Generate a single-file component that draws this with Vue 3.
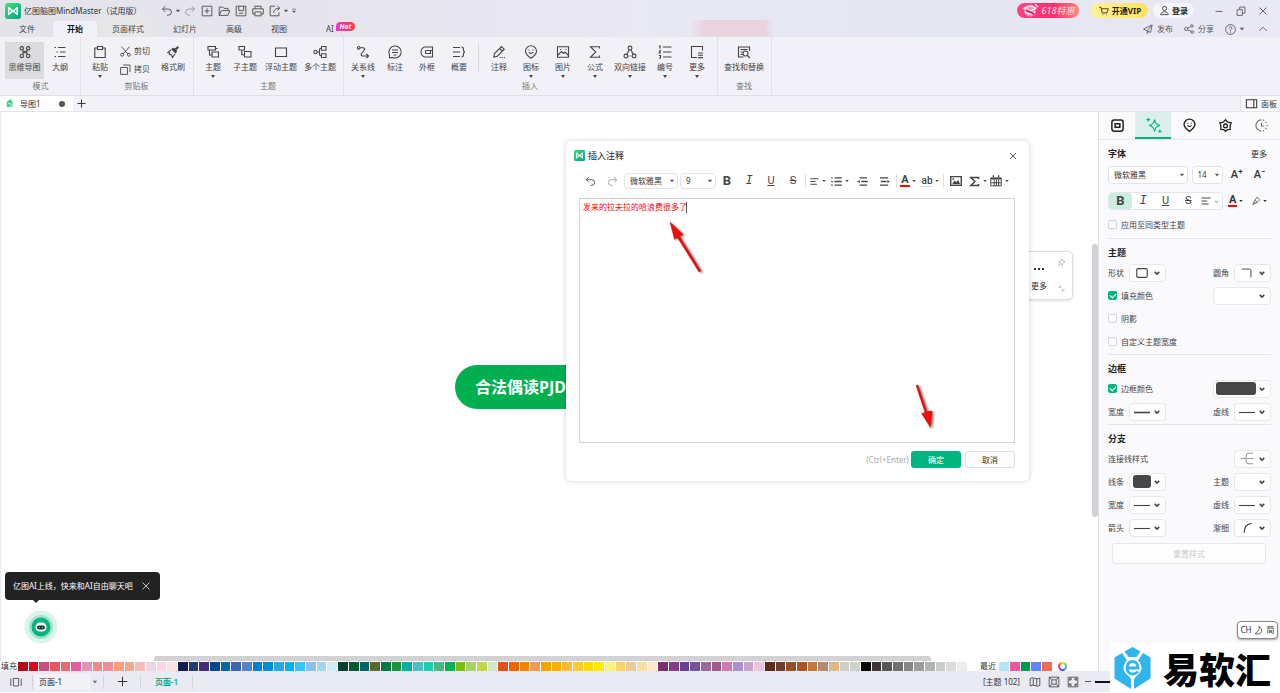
<script setup>
import { h, ref } from 'vue'

const note = ref('发来的拉夫拉的哈浪费很多了')
const fontName = ref('微软雅黑')
const noteSize = ref('9')
const textSize = ref('14')
const applySame = ref(false)
const fillOn = ref(true)
const shadowOn = ref(false)
const customWidth = ref(false)
const borderOn = ref(true)
const pageName = ref('页面-1')

const fill = (d) => ({ d, fill: 'currentColor', stroke: 'none' })
const bold = (d) => ({ d, 'stroke-width': 1.6 })

const icons = {
  undo: ['M6 2.500 2.800 5.800 6 9M3 5.800H9.500a3.500 3.500 0 0 1 0 7H8'],
  redo: ['M10 2.500 13.200 5.800 10 9M13 5.800H6.500a3.500 3.500 0 0 0 0 7H8'],
  plusBox: ['M2.500 2.500H13.500V13.500H2.500ZM8 5V11M5 8H11'],
  folder: ['M2.500 13V3.500H6.500L8 5H12.500V7M2.500 13 5 7.500H14.500L12.500 13Z'],
  save: ['M2.500 2.500H13.500V13.500H2.500ZM5.500 2.500V7.500H11V2.500M5.500 10.500H10.500'],
  print: ['M4.500 5.500V2.500H11.500V5.500M4.500 11.500H2V5.500H14V11.500H11.500M4.500 9H11.500V13.500H4.500Z'],
  exportBox: ['M8 2.500H2.500V13.500H12.500V9.500M6.500 10C6.500 6.500 9 4.800 13 4.800M10.500 2 13.500 4.800 10.500 7.500'],
  caret: [fill('M4.500 6H11.500L8 10Z')],
  chevron: ['M5 6.500 8 9.500 11 6.500'],
  overflow: ['M5 5H11', fill('M4.800 7.500H11.200L8 11Z')],
  minimize: ['M4 8.500H12'],
  restore: ['M3.500 6.500H9.500V13H3.500ZM6.500 6.500V3.500H12.500V10.500H9.500'],
  close: ['M4 4 12 12M12 4 4 12'],
  up: ['M3 10.500 8 5.500 13 10.500'],
  send: ['M2 8 13.500 2.500 11.500 12.500 7 10.500ZM7 10.500V14L9 11.500M7 10.500 13 3'],
  share: ['M6.500 8a2.200 2.200 0 1 1-4.400 0 2.200 2.200 0 0 1 4.400 0ZM13.500 4a1.700 1.700 0 1 1-3.400 0 1.700 1.700 0 0 1 3.400 0ZM14 12a1.700 1.700 0 1 1-3.400 0 1.700 1.700 0 0 1 3.400 0ZM6.200 7 10.200 4.800M6.200 9 10.800 11.200'],
  help: ['M14 8A6 6 0 1 1 2 8 6 6 0 0 1 14 8ZM6.200 6.700C6.200 4 9.900 4.200 9.800 6.600 9.600 7.800 8 7.800 8 9.500M8 10.500V12'],
  cart: ['M1.500 3H4L5.500 10.500H12L13.800 5H4.500M6 13H7M10.500 13H11.500'],
  user: ['M11 5a3 3 0 1 1-6 0 3 3 0 0 1 6 0ZM2.500 14C2.500 8.500 13.500 8.500 13.500 14Z'],
  mind: ['M6.500 4.300a1.700 1.700 0 1 1-3.400 0 1.700 1.700 0 0 1 3.400 0ZM12.900 4.300a1.700 1.700 0 1 1-3.400 0 1.700 1.700 0 0 1 3.400 0ZM6.500 11.900a1.700 1.700 0 1 1-3.400 0 1.700 1.700 0 0 1 3.400 0ZM12.900 11.900a1.700 1.700 0 1 1-3.400 0 1.700 1.700 0 0 1 3.400 0ZM5.800 5.800Q6.800 8 5.800 10.400M10.200 5.800Q9.200 8 10.200 10.400M6.300 7.500H9.700M6.300 8.800H9.700'],
  outline: ['M2.500 3.500H4M6 3.500H13.500M4.500 8H6M8 8H13.500M2.500 12.500H4M6 12.500H13.500'],
  paste: ['M5.500 4H2.800V13.500H13.200V4H10.500M5.500 2.500H10.500V5.500H5.500Z'],
  cut: ['M3 2 11 11M13 2 5 11M5.600 12a1.800 1.800 0 1 1-3.600 0 1.800 1.800 0 0 1 3.600 0ZM14 12a1.800 1.800 0 1 1-3.600 0 1.800 1.800 0 0 1 3.600 0Z'],
  copy: ['M2 5.500H10.500V14H2ZM5 2.500H13.500V11'],
  brush: [fill('M12.500 2 14 3.500 11.500 6 12 8 10.500 9.500 6.200 5.200 8 3.800 10 4.500Z'), 'M6 5.800 2.800 8.500 4.500 9 4.500 10.500 6.500 11 7.500 13.500 10 9.800'],
  topic: ['M3 2.500H10.500V6H3ZM4.500 6V11H7M7 8H13.500V13H7ZM10.500 4.500H12.500'],
  subtopic: ['M2 2.500H7.500V6H2ZM4.800 6V10.800H7.500M7.500 7.500H14V13H7.500Z'],
  floating: ['M2.500 4H13.500V12.500H2.500Z'],
  multi: ['M5.200 8a1.700 1.700 0 1 1-3.400 0 1.700 1.700 0 0 1 3.400 0ZM5.200 8H7.500M9.500 4.300H8.800Q7.500 4.300 7.500 6V10Q7.500 11.700 8.800 11.700H9.500M9.500 2.500H14V6.200H9.500ZM9.500 9.800H14V13.500H9.500Z'],
  relation: ['M5 3.800H8.500Q10.500 4 9 6.500L6.500 9.500Q5.500 11.700 7.500 12H13M11.500 10 13.500 12 11.500 14M5 3.800a1.300 1.300 0 1 1-2.600 0 1.300 1.300 0 0 1 2.600 0Z'],
  callout: ['M8 2A6 6 0 1 1 5.800 13.500L2.500 13.800V10.500A6 6 0 0 1 8 2ZM5 6H11M5 8.500H11M6.500 11H9.500'],
  boundary: ['M5.500 3H13.500V13H5.500Q2 11.500 2 8T5.500 3ZM6.500 6.500H13.500M6.500 9.500H11.500V6.500M6.500 6.500V9.500'],
  summary: ['M2 3.500H9M2 8H9M2 12.500H9M10.500 3Q12.500 3 12.500 5.500T14 8Q12.500 8 12.500 10.500T10.500 13'],
  noteIcon: ['M2.800 13 3.500 9.500 10.500 2.500 13.200 5.200 6.300 12.200ZM8.500 4.500 11.300 7.200M8.500 13.500H9.700M10.700 13.500H11.900M12.900 13.500H14'],
  pin: ['M8 14.300C4.500 12 2.500 10 2.500 7.300A5.500 5.500 0 0 1 13.500 7.300C13.500 10 11.500 12 8 14.300ZM5.800 8.200Q8 10.800 10.200 8.200M6.200 5.500V6.500M9.800 5.500V6.500'],
  picture: ['M2.500 2.800H13.500V13.200H2.500ZM3 11 6.500 7.500 8.500 9.500 10 8 13 11M5 5.500H6.200M10.500 5.500H11.500'],
  sigma: ['M12.500 4.500V2.700H3.500L8.800 8 3.500 13.300H12.500V11.500'],
  link: ['M9.900 4a1.900 1.900 0 1 1-3.800 0 1.900 1.900 0 0 1 3.800 0ZM5.800 12a1.900 1.900 0 1 1-3.800 0 1.900 1.900 0 0 1 3.800 0ZM14 12a1.900 1.900 0 1 1-3.800 0 1.900 1.900 0 0 1 3.800 0ZM7.200 5.800 4.800 10.200M8.800 5.800 11.200 10.200M6.500 12H7.500M8.500 12H9.500'],
  numbering: ['M6 3H14.500M6 8H14.500M6 13H14.500M2 2.500 3 2V4.800M2 6.800H3.500L2.200 9H3.800M2 11.500H3.500V14H2'],
  moreBox: ['M13.500 6.500V2.500H2.500V13.500H8M9 9H14M9 11.300H14M9 13.600H14'],
  find: ['M7.500 13H2.500V3H13.500V7M4.500 5.500H11.500M4.500 8H6.500M4.500 10.500H6.500M12 9.500a2.500 2.500 0 1 1-5 0 2.500 2.500 0 0 1 5 0ZM11.300 11.300 14 14'],
  plus: ['M8 3V13M3 8H13'],
  panel: ['M2.500 4H13.500V12.500H2.500ZM10.500 4V12.500'],
  tabTopic: [bold('M4.500 2H11.500Q14 2 14 4.500V11.500Q14 14 11.500 14H4.500Q2 14 2 11.500V4.500Q2 2 4.500 2ZM5.500 6.200H10.500V9.800H5.500Z')],
  tabStyle: ['M9 2.500Q9.800 7.200 14 8 9.800 8.800 9 13.500 8.200 8.800 4 8 8.200 7.200 9 2.500ZM3 .8V4.200M1.300 2.500H4.700M14 11.800V15M12.400 13.400H15.600'],
  tabMark: [{ d: 'M8 14.300C4.300 11.500 2.200 9.500 2.200 7A5.800 5.800 0 0 1 13.800 7C13.800 9.500 11.700 11.500 8 14.300Z', 'stroke-width': 1.5 }, 'M5.800 7.800Q8 10.300 10.200 7.800M6.200 5V6.200M9.800 5V6.200'],
  tabTheme: [{ d: 'M8 1.800 10.300 4.500 14 5.200 12.900 8.300 13 12.200 10 12.300 8 14.200 6 12.300 3 12.200 3.100 8.300 2 5.200 5.700 4.500ZM10 8.400a2 2 0 1 1-4 0 2 2 0 0 1 4 0Z', 'stroke-width': 1.4 }],
  tabHistory: ['M8 2A6 6 0 1 0 8 14M8 5V8.500H10.500', { d: 'M9.500 2.200A6 6 0 0 1 9.500 13.800', 'stroke-dasharray': '1.500 2' }],
  align: [bold('M2 4H14M2 8H9.500M2 12H11.500')],
  bullets: [bold('M5.500 3.500H14.500M5.500 8H14.500M5.500 12.500H14.500M1.500 3.500H3.300M1.500 8H3.300M1.500 12.500H3.300')],
  indent: [bold('M4.500 3.500H13.500M6.500 8H14.500M4.500 12.500H13.500'), fill('M1.500 8 4.500 6V10Z')],
  outdent: [bold('M2.500 3.500H12.500M3.500 8H10.500M2.500 12.500H12.500'), fill('M14.500 8 11.500 6V10Z')],
  image: [bold('M2 3H14V13H2Z'), fill('M3.500 11.800 6.500 7.500 8.500 9.500 10.500 6.500 12.800 11.800ZM4 4.800H6V6.500H4Z')],
  sigmaBold: [{ d: 'M13 4.800V3H3.500L8.500 8 3.500 13H13V11.200', 'stroke-width': 1.9 }],
  calendar: ['M2 4.500H14V13.500H2ZM6 6.500V13.500M8.500 6.500V13.500M11 6.500V13.500M2.500 10H13.500', bold('M2 5.500H14M5 1.500V4M11 1.500V4')],
  tack: ['M9 2 14 7 12 7.500 9.500 10 9 13 3 7 6 6.500 8.500 4ZM6 10 2 14'],
  collapse: ['M2.500 6H6.500V2M9.500 14V10H13.500'],
  pen: ['M3 14 5.500 7.500 9.500 2 14 6 9.500 11 4.500 12M6.800 6.500 10 10M3 14 7 10'],
  rect: [{ d: 'M3.500 3H12.500Q14 3 14 4.500V11.500Q14 13 12.500 13H3.500Q2 13 2 11.500V4.500Q2 3 3.500 3Z', 'stroke-width': 1.300 }],
  corner: ['M2 3.500H10.500Q12.500 3.500 12.500 5.500V13'],
  line: ['M0 8.500H16'],
  thick: [bold('M0 8.500H16')],
  branch: ['M1 8H14M6.500 8Q6.500 2.500 9 2.500H14M6.500 8Q6.500 13.500 9 13.500H14'],
  taper: [bold('M4 14Q4 4 13 3')],
  pages: ['M2 4V12.500M14 4V12.500M5 4H11V12.500H5Z'],
  map: ['M2.500 4Q5 2.500 8 4 11 5 13.500 3.500V12Q11 13.500 8 12 5 11 2.500 12.500ZM6 4V12M10 4V12'],
  fit: ['M2.500 2.500H13.500V13.500H2.500ZM5.500 5.500H10.500V10.500H5.500ZM2.500 2.500 5.500 5.500M13.500 2.500 10.500 5.500M2.500 13.500 5.500 10.500M13.500 13.500 10.500 10.500'],
  full: ['M2.500 2.500H13.500V13.500H2.500Z', bold('M4.500 6.500V4.500H6.500M9.500 4.500H11.500V6.500M4.500 9.500V11.500H6.500M9.500 11.500H11.500V9.500')],
  moon: ['M8.500 2Q11 8 3 12.500 9.500 15 12.500 10 14.500 5.500 8.500 2Z'],
}

const Icon = (props) =>
  h(
    'svg',
    { viewBox: '0 0 16 16', width: props.s || 16, height: props.s || 16, fill: 'none', stroke: 'currentColor', 'stroke-width': 1.1, 'aria-hidden': 'true' },
    icons[props.n].map((p) => h('path', typeof p === 'string' ? { d: p } : p)),
  )
Icon.props = ['n', 's']

const quick = [
  ['undo', 16, '撤销'], ['caret', 8, '撤销列表'], ['redo', 16, '恢复'], ['plusBox', 16, '新建'], ['folder', 16, '打开'],
  ['save', 16, '保存'], ['print', 16, '打印'], ['exportBox', 16, '导出'], ['caret', 8, '导出列表'], ['overflow', 12, '自定义'],
]
const tabs = ['文件', '开始', '页面样式', '幻灯片', '高级', '视图', 'AI']

const topicTools = [
  { t: '主题', i: 'topic', c: true }, { t: '子主题', i: 'subtopic' }, { t: '浮动主题', i: 'floating', w: 'w40' }, { t: '多个主题', i: 'multi', w: 'w38' },
]
const insertA = [
  { t: '关系线', i: 'relation', c: true }, { t: '标注', i: 'callout' }, { t: '外框', i: 'boundary' }, { t: '概要', i: 'summary' },
]
const insertB = [
  { t: '注释', i: 'noteIcon' }, { t: '图标', i: 'pin', c: true }, { t: '图片', i: 'picture', c: true }, { t: '公式', i: 'sigma', c: true },
  { t: '双向链接', i: 'link', c: true, w: 'w38' }, { t: '编号', i: 'numbering', c: true }, { t: '更多', i: 'moreBox', c: true },
]

const sideTabs = [
  ['tabTopic', '主题'], ['tabStyle', '样式'], ['tabMark', '标记'], ['tabTheme', '风格'], ['tabHistory', '历史'],
]

const swatches = (
  'b30a16 d80b1e c94f7c e85563 ea6a70 e65ca0 e095b8 ee8d87 ef8e9b ff9d78 f0a890 f6bcb8 ead5e8 fdd3e5 fde0e6 ' +
  '10214f 253c70 432f7a 04468c 0568a6 4162ae 5684c4 0181cf 018fcf 2aa9e0 00b4f1 33c7f7 8bc0ea a0d8ef cfebf5 ' +
  '053f2e 055a30 046664 566b2d 047a45 1c963c 00b0a0 50bfc3 1ccfb3 46bb80 00b155 80bb10 a4d265 bfd845 cfe8c8 ' +
  'e35020 ec6700 f08300 f39a55 f2a600 fdb000 fdb933 fbcb33 ffd900 ffec00 fbf180 fdd070 e9cc98 fddcac fce8cf ' +
  '7a3170 833c84 673f94 75529a 986aa2 a05a8a cf7cb2 ab92cf c8a4c8 eec3db ' +
  '5d2a1d 733c2f 934e2a ab5526 c2793f b58870 e0b886 d4ccc6 cbd5cb ' +
  '000000 3e3635 575757 6f6f6f 868686 9c9c9c b1b4b3 cacccc dcdcdc ededed'
).split(' ')
const recent = ['b3e5f5', 'f0569b', '049a49', '6286ff', 'f26b57']
</script>

<template>
  <div class="app">
    <header class="top">
      <div class="titlebar">
        <svg class="logo" viewBox="0 0 16 16" width="16" height="16" aria-hidden="true">
          <defs>
            <linearGradient id="lg" x1="0" y1="0" x2="1" y2="1">
              <stop offset="0" stop-color="#3ee07a" /><stop offset="1" stop-color="#0aa08c" />
            </linearGradient>
          </defs>
          <rect width="16" height="16" rx="3" fill="url(#lg)" />
          <path d="M3.800 11.500V4.500L8 8.500 12.200 4.500V11.500L8 7.500Z" fill="none" stroke="#fff" stroke-width="1.400" stroke-linejoin="round" />
        </svg>
        <span class="title">亿图脑图MindMaster（试用版）</span>
        <div class="quick">
          <button v-for="(q, i) in quick" :key="i" :class="['q' + q[1], { dim: q[0] === 'redo' }]" :aria-label="q[2]"><Icon :n="q[0]" :s="q[1] === 16 ? 14 : 10" /></button>
        </div>
        <div class="account">
          <button class="promo">
            <svg viewBox="0 0 18 15" width="18" height="15" aria-hidden="true">
              <circle cx="8" cy="7.500" r="6" fill="#ff8fb0" />
              <path d="M2 5 9 3 14 5 9 8ZM3 9Q8 13 13 9M13 1 16 4" fill="none" stroke="#fff" stroke-width="1.100" />
              <path d="M4 7 12 11" stroke="#c41f5f" stroke-width="1.500" />
            </svg>
            618特惠
          </button>
          <button class="vip"><Icon n="cart" :s="12" />开通VIP</button>
          <button class="login"><Icon n="user" :s="11" />登录</button>
        </div>
        <div class="win">
          <button aria-label="最小化"><Icon n="minimize" :s="14" /></button>
          <button aria-label="还原"><Icon n="restore" :s="14" /></button>
          <button aria-label="关闭"><Icon n="close" :s="14" /></button>
        </div>
      </div>
      <div class="menubar">
        <nav class="tabs">
          <button v-for="t in tabs" :key="t" :class="{ on: t === '开始', ai: t === 'AI' }">{{ t }}<span v-if="t === 'AI'" class="hot">Hot</span></button>
        </nav>
        <div class="actions">
          <button><Icon n="send" :s="12" />发布</button>
          <button><Icon n="share" :s="12" />分享</button>
          <button class="helpb" aria-label="帮助"><Icon n="help" :s="13" /><Icon n="caret" :s="10" /></button>
          <button aria-label="收起功能区"><Icon n="up" :s="12" /></button>
        </div>
      </div>
    </header>

    <section class="ribbon">
      <div class="group g-mode">
        <div class="tools">
          <button class="tool on w39"><Icon n="mind" />思维导图</button>
          <button class="tool"><Icon n="outline" />大纲</button>
        </div>
        <span class="cap">模式</span>
      </div>
      <div class="group">
        <div class="tools">
          <button class="tool"><Icon n="paste" />粘贴<i class="car"></i></button>
          <div class="stack">
            <button><Icon n="cut" :s="13" />剪切</button>
            <button><Icon n="copy" :s="13" />拷贝</button>
          </div>
          <button class="tool"><Icon n="brush" />格式刷</button>
        </div>
        <span class="cap">剪贴板</span>
      </div>
      <div class="group">
        <div class="tools">
          <button v-for="t in topicTools" :key="t.t" class="tool" :class="t.w"><Icon :n="t.i" />{{ t.t }}<i v-if="t.c" class="car"></i></button>
        </div>
        <span class="cap">主题</span>
      </div>
      <div class="group">
        <div class="tools">
          <button v-for="t in insertA" :key="t.t" class="tool"><Icon :n="t.i" />{{ t.t }}<i v-if="t.c" class="car"></i></button>
          <span class="bar"></span>
          <button v-for="t in insertB" :key="t.t" class="tool" :class="t.w"><Icon :n="t.i" />{{ t.t }}<i v-if="t.c" class="car"></i></button>
        </div>
        <span class="cap">插入</span>
      </div>
      <div class="group">
        <div class="tools">
          <button class="tool w46"><Icon n="find" />查找和替换</button>
        </div>
        <span class="cap">查找</span>
      </div>
    </section>

    <div class="docs">
      <button class="doc">
        <svg viewBox="0 0 8 10" width="7" height="9" aria-hidden="true"><path d="M1 3 5 0 7.500 3V9H1Z" fill="#2fd07f" /><path d="M2 6Q4 3 6 6T4 8" fill="none" stroke="#fff" /></svg>
        <span>导图1</span><i class="dot"></i>
      </button>
      <button class="add" aria-label="新建导图"><Icon n="plus" :s="13" /></button>
      <button class="panelbtn"><Icon n="panel" :s="15" />面板</button>
    </div>

    <main class="work">
      <div class="left">
        <div class="canvas">
          <div class="node">合法偶读PJD</div>

          <div class="float">
            <button class="fmore" aria-label="更多"><svg viewBox="0 0 12 4" width="12" height="4"><path d="M1 2H3M5 2H7M9 2H11" stroke="#333" stroke-width="2" /></svg>更多</button>
            <div class="fside"><Icon n="tack" :s="9" /><Icon n="collapse" :s="9" /></div>
          </div>

          <div class="dialog" role="dialog" aria-label="插入注释">
            <div class="dhead">
              <svg viewBox="0 0 16 16" width="11" height="11" aria-hidden="true">
                <rect width="16" height="16" rx="2" fill="url(#lg)" />
                <path d="M3.800 11.500V4.500L8 8.500 12.200 4.500V11.500L8 7.500Z" fill="none" stroke="#fff" stroke-width="1.500" />
              </svg>
              <span>插入注释</span>
              <button aria-label="关闭对话框"><Icon n="close" :s="12" /></button>
            </div>
            <div class="dbar">
              <button class="tb" aria-label="撤销"><Icon n="undo" :s="13" /></button>
              <button class="tb dim" aria-label="恢复"><Icon n="redo" :s="13" /></button>
              <span class="sel s54"><select v-model="fontName" aria-label="注释字体"><option>微软雅黑</option></select><Icon n="caret" :s="10" /></span>
              <span class="sel s36"><select v-model="noteSize" aria-label="注释字号"><option>9</option></select><Icon n="caret" :s="10" /></span>
              <button class="tb fb">B</button>
              <button class="tb fi">I</button>
              <button class="tb fu">U</button>
              <button class="tb fs">S</button>
              <span class="vr"></span>
              <button class="tb" aria-label="对齐"><Icon n="align" :s="11" /><Icon n="caret" :s="8" /></button>
              <button class="tb" aria-label="列表"><Icon n="bullets" :s="13" /><Icon n="caret" :s="8" /></button>
              <button class="tb" aria-label="减少缩进"><Icon n="indent" :s="13" /></button>
              <button class="tb" aria-label="增加缩进"><Icon n="outdent" :s="13" /></button>
              <span class="vr"></span>
              <button class="tb"><span class="fa">A</span><Icon n="caret" :s="8" /></button>
              <button class="tb"><span class="fab">ab</span><Icon n="caret" :s="8" /></button>
              <span class="vr"></span>
              <button class="tb" aria-label="图片"><Icon n="image" :s="14" /></button>
              <button class="tb" aria-label="公式"><Icon n="sigmaBold" :s="13" /><Icon n="caret" :s="8" /></button>
              <button class="tb" aria-label="日期"><Icon n="calendar" :s="14" /><Icon n="caret" :s="8" /></button>
            </div>
            <div class="edit">
              <textarea v-model="note" aria-label="注释内容" spellcheck="false"></textarea>
              <i class="cursor"></i>
            </div>
            <div class="dfoot">
              <span class="hint">(Ctrl+Enter)</span>
              <button class="ok">确定</button>
              <button class="cancel">取消</button>
            </div>
            <svg class="arrow a1" viewBox="0 0 44 60" width="44" height="60" aria-hidden="true">
              <path d="M5 4 9.500 21.500 12.500 19.500 34 54 36 53 14.500 18.300 18 16.500Z" fill="#f80a0a" stroke="#8d1010" stroke-width=".4" />
            </svg>
            <svg class="arrow a2" viewBox="0 0 30 56" width="30" height="56" aria-hidden="true">
              <path d="M5 5.500 7 5 16 31.500 21 31 19.500 47.500 10.500 33.500 14 32.500Z" fill="#f80a0a" stroke="#8d1010" stroke-width=".4" />
            </svg>
          </div>

          <div class="tip"><span>亿图AI上线，快来和AI自由聊天吧</span><button aria-label="关闭提示"><Icon n="close" :s="14" /></button></div>
          <button class="bot" aria-label="AI助手">
            <svg viewBox="0 0 34 34" width="34" height="34" aria-hidden="true">
              <circle cx="17" cy="17" r="16.500" fill="#d9f4eb" /><circle cx="17" cy="17" r="12" fill="#a3e3cd" /><circle cx="17" cy="17" r="9.500" fill="#00b67f" />
              <rect x="11.500" y="12.500" width="11" height="9" rx="4.500" fill="#fff" /><rect x="13" y="15.500" width="8" height="4" rx="2" fill="#173a35" /><path d="M15 17.500H16M18 17.500H19" stroke="#4de0b0" />
            </svg>
          </button>
          <i class="vscroll"></i>
          <i class="hscroll"></i>
        </div>
        <div class="palette">
          <span class="plabel">填充</span>
          <div class="colors"><i v-for="(c, i) in swatches" :key="i" :style="{ background: '#' + c }"></i></div>
          <div class="recent">
            <span>最近</span>
            <div class="rcolors"><i v-for="c in recent" :key="c" :style="{ background: '#' + c }"></i></div>
            <i class="wheel"></i>
          </div>
        </div>
      </div>

      <aside class="side">
        <div class="stabs">
          <button v-for="t in sideTabs" :key="t[0]" :class="{ on: t[0] === 'tabStyle', dim: t[0] === 'tabHistory' }" :aria-label="t[1]"><Icon :n="t[0]" :s="t[0] === 'tabStyle' ? 17 : 15" /></button>
        </div>

        <section class="sec font">
          <div class="hd"><h2>字体</h2><a href="#">更多</a></div>
          <div class="frow">
            <span class="sel s80"><select v-model="fontName" aria-label="字体"><option>微软雅黑</option></select><Icon n="caret" :s="10" /></span>
            <span class="sel s32"><select v-model="textSize" aria-label="字号"><option>14</option></select><Icon n="caret" :s="10" /></span>
            <button class="fbtn">A<sup>+</sup></button>
            <button class="fbtn">A<sup>−</sup></button>
          </div>
          <div class="frow">
            <div class="seg">
              <button class="fb on">B</button><button class="fi">I</button><button class="fu">U</button><button class="fs">S</button>
              <button aria-label="对齐方式"><Icon n="align" :s="12" /><Icon n="chevron" :s="9" /></button>
            </div>
            <button class="fbtn"><span class="fa">A</span><Icon n="caret" :s="8" /></button>
            <button class="fbtn" aria-label="高亮"><Icon n="pen" :s="10" /><Icon n="caret" :s="8" /></button>
          </div>
          <div class="row"><label><input v-model="applySame" type="checkbox" />应用至同类型主题</label></div>
        </section>

        <section class="sec">
          <h2>主题</h2>
          <div class="row"><span>形状</span><button class="dd" aria-label="形状"><Icon n="rect" :s="14" /><Icon n="chevron" :s="12" class="chv" /></button><span class="r">圆角</span><button class="dd" aria-label="圆角"><Icon n="corner" :s="14" /><Icon n="chevron" :s="12" class="chv" /></button></div>
          <div class="row"><label><input v-model="fillOn" type="checkbox" />填充颜色</label><button class="dd wide r" aria-label="填充颜色选择"><i class="none"></i><Icon n="chevron" :s="12" class="chv" /></button></div>
          <div class="row"><label><input v-model="shadowOn" type="checkbox" />阴影</label></div>
          <div class="row"><label><input v-model="customWidth" type="checkbox" />自定义主题宽度</label></div>
        </section>

        <section class="sec">
          <h2>边框</h2>
          <div class="row"><label><input v-model="borderOn" type="checkbox" />边框颜色</label><button class="dd wide r" aria-label="边框颜色选择"><i class="chip long"></i><Icon n="chevron" :s="12" class="chv" /></button></div>
          <div class="row"><span>宽度</span><button class="dd" aria-label="边框宽度"><Icon n="thick" /><Icon n="chevron" :s="12" class="chv" /></button><span class="r">虚线</span><button class="dd" aria-label="边框虚线"><Icon n="line" /><Icon n="chevron" :s="12" class="chv" /></button></div>
        </section>

        <section class="sec last">
          <h2>分支</h2>
          <div class="row"><span>连接线样式</span><button class="dd r" aria-label="连接线样式"><Icon n="branch" :s="15" class="soft" /><Icon n="chevron" :s="12" class="chv" /></button></div>
          <div class="row"><span>线条</span><button class="dd" aria-label="线条颜色"><i class="chip"></i><Icon n="chevron" :s="12" class="chv" /></button><span class="r">主题</span><button class="dd" aria-label="分支主题"><i class="none"></i><Icon n="chevron" :s="12" class="chv" /></button></div>
          <div class="row"><span>宽度</span><button class="dd" aria-label="分支宽度"><Icon n="line" /><Icon n="chevron" :s="12" class="chv" /></button><span class="r">虚线</span><button class="dd" aria-label="分支虚线"><Icon n="line" /><Icon n="chevron" :s="12" class="chv" /></button></div>
          <div class="row"><span>箭头</span><button class="dd" aria-label="箭头"><Icon n="line" /><Icon n="chevron" :s="12" class="chv" /></button><span class="r">渐细</span><button class="dd" aria-label="渐细"><Icon n="taper" :s="13" /><Icon n="chevron" :s="12" class="chv" /></button></div>
          <button class="reset">重置样式</button>
        </section>
      </aside>
    </main>

    <footer class="status">
      <button class="pg" aria-label="页面列表"><Icon n="pages" :s="14" /></button>
      <span class="psel"><select v-model="pageName" aria-label="页面"><option>页面-1</option></select><Icon n="caret" :s="10" /></span>
      <button class="padd" aria-label="添加页面"><Icon n="plus" :s="15" /></button>
      <button class="pcur">页面-1</button>
      <div class="sright">
        <span>[主题 102]</span>
        <button aria-label="导航"><Icon n="map" :s="14" /></button>
        <button aria-label="适应页面"><Icon n="fit" :s="14" /></button>
        <button aria-label="全屏"><Icon n="full" :s="14" /></button>
        <i class="minus"></i><i class="zoomline"></i>
      </div>
    </footer>

    <div class="ime">CH<Icon n="moon" :s="11" />简</div>
    <div class="brand">
      <svg viewBox="0 0 36 42" width="37" height="42" aria-hidden="true">
        <path d="M18 0 26 4.500 22 10H14L10 4.500ZM7.500 6 12.500 13.500Q9 17 9 21T14.500 29.500Q16.500 31 16.500 33V42L0 31.500V10.500ZM28.500 6 23.500 13.500Q27 17 27 21T21.500 29.500Q19.500 31 19.500 33V42L36 31.500V10.500Z" fill="#2fb4ee" />
        <path d="M12.500 21H23.500Q23 14.500 18 14.500T12.500 21Q13 27 18 27 21.500 27 23.500 24.500" fill="none" stroke="#2fb4ee" stroke-width="2.800" />
      </svg>
      <span>易软汇</span>
    </div>
  </div>
</template>

<style>
body { background: #fff; }
</style>

<style scoped>
.app { position: relative; display: flex; flex-direction: column; min-height: 100vh; padding-bottom: 1px; box-sizing: border-box; overflow: hidden; font: 8px/12px "Noto Sans", "Noto Sans CJK SC", sans-serif; color: #333; }
.app * { box-sizing: border-box; }
button { font: inherit; color: inherit; background: none; border: 0; padding: 0; margin: 0; display: flex; align-items: center; justify-content: center; white-space: nowrap; }
svg { flex: none; display: block; }
select { appearance: none; font: inherit; color: inherit; border: 0; background: none; width: 100%; height: 100%; padding: 0 12px 0 5px; outline: 0; }
h2 { margin: 0; font-size: 9px; line-height: 16px; font-weight: 700; color: #222; }

.top { background: radial-gradient(ellipse 40px 16px at 125px 26px, #ece9e4, transparent), linear-gradient(90deg, transparent 690px, #e8d3de 705px, #e8d3de 765px, transparent 775px) 0 20px no-repeat, linear-gradient(90deg, #e3e3ea, #e7e6f0 35%, #e9e9f4 50%, #e4e6f2 75%, #e9e9f5); }
.titlebar { display: flex; align-items: center; height: 21px; padding-left: 5px; }
.title { margin-left: 3px; font-size: 8px; white-space: nowrap; color: #333; width: 134px; }
.quick { display: flex; align-items: center; color: #555; }
.quick .dim { color: #999; }
.q16 { width: 17px; height: 16px; }
.q8 { width: 6px; height: 16px; }
.q12 { width: 10px; height: 16px; }
.account { display: flex; gap: 5px; margin-left: auto; font-weight: 700; color: #222; }
.account button { height: 15px; border-radius: 8px; gap: 2px; }
.promo { width: 62px; margin-right: 7px; font-style: italic; font-size: 9px; background: linear-gradient(90deg, #ff3f85, #ff2e6c 60%, #ff8a78); }
.account .promo { color: #ffe6ee; font-weight: 400; }
.vip { width: 57px; background: linear-gradient(90deg, #fff394, #ffe25c); }
.login { width: 41px; background: #f5f4f9; }
.win { display: flex; gap: 8px; margin: 0 10px 0 18px; color: #666; }
.win button { width: 14px; height: 16px; }
.menubar { display: flex; justify-content: space-between; height: 16px; }
.tabs { display: flex; gap: 1px; margin-left: 5px; }
.tabs button { position: relative; padding: 0 14px; height: 16px; color: #444; }
.tabs .on { margin-left: 3px; background: #f2f1f7; border-radius: 4px 4px 0 0; color: #111; font-weight: 700; }
.tabs .ai { margin-left: 10px; }
.hot { position: absolute; left: 24px; top: 1px; width: 19px; height: 9px; border-radius: 5px 5px 5px 0; background: linear-gradient(90deg, #f532c8, #ff3c32); color: #fff; font: italic 700 7px/9px "Noto Sans", sans-serif; text-align: center; }
.actions { display: flex; gap: 10px; margin-right: 11px; color: #555; }
.actions button { gap: 3px; }
.actions .helpb { gap: 0; }

.ribbon { display: flex; height: 59px; background: #f2f1f7; border-bottom: 1px solid #dfdee5; }
.group { display: flex; flex-direction: column; align-items: center; padding: 5px 4px 0 3px; border-right: 1px solid #e1e0e7; }
.g-mode { padding-left: 5px; }
.tools { display: flex; height: 38px; }
.cap { color: #777; line-height: 12px; }
.tool { position: relative; flex-direction: column; justify-content: flex-start; width: 32px; height: 37px; padding-top: 2px; gap: 1px; color: #444; line-height: 12px; }
.tool.on { background: #dcdbde; }
.w38 { width: 38px; }
.w39 { width: 39px; }
.w40 { width: 40px; }
.w46 { width: 46px; }
.car { position: absolute; left: 50%; margin-left: -2px; bottom: 1px; border: 2px solid transparent; border-top: 3px solid #444; border-bottom: 0; }
.stack { display: flex; flex-direction: column; gap: 4px; width: 41px; padding-top: 2px; color: #444; }
.stack button { height: 14px; gap: 2px; padding-right: 4px; }
.bar { width: 1px; height: 28px; margin: 1px 4px 0 3px; background: #d9d8df; }

.docs { display: flex; height: 16px; background: #f2f1f7; border-bottom: 1px solid #e4e3ea; }
.doc { width: 73px; padding: 0 8px 0 6px; background: #fff; justify-content: flex-start; gap: 7px; }
.dot { width: 6px; height: 6px; border-radius: 50%; background: #555; margin-left: auto; }
.add { width: 16px; color: #222; }
.panelbtn { margin-left: auto; width: 40px; gap: 2px; background: #fafafd; border-left: 1px solid #e4e3ea; }

.work { flex: 1; display: flex; }
.left { flex: 1; min-width: 0; display: flex; flex-direction: column; }
.canvas { position: relative; flex: 1; background: #fff; border-left: 1px solid #e8e8f2; overflow: hidden; }
.node { position: absolute; left: 454px; top: 253px; height: 44px; width: 180px; padding-left: 20px; border-radius: 22px; background: #00b050; color: #fff; font-size: 16px; line-height: 44px; font-weight: 700; }
.float { position: absolute; left: 1010px; top: 139px; width: 62px; height: 49px; display: flex; justify-content: flex-end; gap: 10px; padding: 6px; border: 1px solid #ddd; border-radius: 5px; background: #fff; box-shadow: 0 1px 3px #0002; }
.fmore { flex-direction: column; gap: 9px; padding-top: 7px; }
.fside { display: flex; flex-direction: column; justify-content: space-between; color: #888; }
.dialog { position: absolute; left: 565px; top: 29px; width: 463px; background: #fff; border-radius: 5px; box-shadow: 0 0 5px #0003; padding-bottom: 13px; }
.dhead { display: flex; align-items: center; height: 29px; padding: 0 10px 0 8px; gap: 3px; font-size: 9px; color: #222; }
.dhead button { margin-left: auto; color: #333; }
.dbar { display: flex; align-items: center; height: 22px; padding-left: 13px; color: #444; }
.tb { width: 22px; height: 16px; }
.tb.dim { color: #999; }
.sel { position: relative; display: block; height: 18px; border: 1px solid #e3e3e8; border-radius: 4px; background: #fff; color: #333; }
.sel svg { position: absolute; right: 0; top: 50%; margin-top: -5px; pointer-events: none; color: #555; }
.dbar .sel { height: 16px; }
.s54 { width: 54px; margin-left: 1px; margin-right: 2px; }
.s36 { width: 36px; }
.s80 { width: 80px; margin-right: 4px; }
.s32 { width: 32px; }
.fb { font: 700 13px/16px Roboto, sans-serif; }
.fi { font: italic 12px/16px "Liberation Mono", monospace; }
.fu { font: 11px/16px Roboto, sans-serif; text-decoration: underline; }
.fs { font: 11px/16px Roboto, sans-serif; text-decoration: line-through; }
.fa { font: 700 11px/10px Roboto, sans-serif; border-bottom: 2px solid #f00; padding: 0 1px; }
.fab { font: 500 10px/10px Roboto, sans-serif; border-bottom: 1px solid #ddd; }
.vr { width: 1px; height: 14px; margin: 0 1px; background: #ddd; }
.edit { position: relative; margin: 6px 14px 0 13px; }
textarea { display: block; width: 100%; height: 245px; padding: 1px 3px; resize: none; outline: 0; border: 1px solid #d3d3d6; border-radius: 0; font: inherit; line-height: 14px; color: #f00; background: #fff; }
.cursor { position: absolute; left: 107px; top: 4px; width: 1px; height: 11px; background: #555; }
.dfoot { display: flex; justify-content: flex-end; align-items: center; margin: 8px 14px 0 0; }
.hint { color: #aaa; font-size: 8px; margin-right: 2px; }
.dfoot button { width: 50px; height: 17px; border-radius: 3px; }
.ok { background: #00b67f; color: #fff; }
.dfoot .cancel { margin-left: 4px; border: 1px solid #ddd; }
.arrow { position: absolute; filter: drop-shadow(2px 1px 1px #0007); pointer-events: none; }
.a1 { left: 99px; top: 77px; }
.a2 { left: 345px; top: 239px; }
.tip { position: absolute; left: 4px; bottom: 61px; width: 155px; height: 28px; display: flex; align-items: center; justify-content: space-between; padding: 0 7px 0 8px; border-radius: 4px; background: #222; color: #fff; white-space: nowrap; }
.tip::after { content: ""; position: absolute; left: 28px; top: 28px; border: 3px solid transparent; border-top-color: #222; border-bottom: 0; }
.tip button { color: #ccc; }
.bot { position: absolute; left: 23px; bottom: 17px; }
.vscroll { position: absolute; right: 0; top: 132px; width: 6px; height: 273px; border-radius: 3px; background: #d2d2d4; }
.hscroll { position: absolute; left: 153px; right: 167px; bottom: 0; height: 5px; border-radius: 3px 3px 0 0; background: #d2d2d4; }
.palette { display: flex; align-items: center; height: 10px; background: #fff; }
.plabel { width: 18px; padding-left: 1px; white-space: nowrap; }
.colors { flex: 1; display: flex; gap: 1px; height: 9px; }
.colors i { flex: 1; }
.recent { display: flex; align-items: center; width: 131px; padding-left: 13px; }
.recent span { width: 19px; }
.rcolors { display: flex; gap: 1px; width: 53px; height: 9px; }
.rcolors i { flex: 1; }
.wheel { width: 9px; height: 9px; margin-left: 6px; border-radius: 50%; background: radial-gradient(circle, #fff 2px, transparent 3px), conic-gradient(#f8e71c, #5ad44b, #22c7e8, #3b55f5, #d339e0, #f5413b, #f8e71c); }

.side { width: 182px; background: #fafafd; border-left: 1px solid #dfdfe8; }
.stabs { display: flex; height: 28px; border-bottom: 1px solid #e4e4ea; color: #222; }
.stabs button { flex: 1; padding-top: 2px; border-bottom: 2px solid transparent; }
.stabs .on { background: #dcefea; border-bottom-color: #00b67f; color: #00b67f; }
.stabs .dim { color: #666; }
.sec { margin: 0 9px; padding: 6px 0 1px; border-bottom: 1px solid #e4e4ea; }
.last { border-bottom: 0; }
.font { padding-bottom: 2px; }
.hd { display: flex; justify-content: space-between; align-items: center; margin-bottom: 4px; }
.hd a { color: #333; text-decoration: none; margin-right: 4px; }
.frow { display: flex; height: 18px; margin-bottom: 8px; align-items: center; }
.frow + .frow { margin-bottom: 3px; }
.fbtn { width: 23px; font: 500 11px/14px Roboto, sans-serif; color: #333; }
.sel + .fbtn, .seg + .fbtn { margin-left: 2px; }
.fbtn sup { font-size: 8px; line-height: 8px; align-self: flex-start; }
.seg { display: flex; width: 116px; height: 18px; border: 1px solid #e4e4ea; border-radius: 4px; background: #fff; color: #444; }
.seg button { flex: 1; }
.seg .on { background: #c9ece0; border-radius: 4px; }
.row { display: flex; align-items: center; height: 23px; white-space: nowrap; color: #444; }
.row > span { margin-right: 5px; }
.row .r { margin-left: auto; }
label { display: flex; align-items: center; gap: 4px; }
input[type="checkbox"] { appearance: none; position: relative; width: 9px; height: 9px; margin: 0; border: 1px solid #d4d4da; border-radius: 2px; background: #fff; }
input[type="checkbox"]:checked { background: #00b67f; border-color: #00b67f; }
input:checked::after { content: ""; position: absolute; left: 2px; top: 0; width: 3px; height: 5px; border: solid #fff; border-width: 0 1px 1px 0; transform: rotate(45deg); }
.dd { justify-content: space-between; width: 37px; height: 18px; padding: 0 2px 0 3px; border: 1px solid #e6e6ec; border-radius: 4px; background: #fff; color: #444; }
.dd > :first-child { margin: 0 auto; }
.wide { width: 58px; padding-left: 1px; }
.chip { width: 19px; height: 13px; border-radius: 3px; background: #474747; }
.chip.long { width: 40px; }
.chv { stroke-width: 2; }
.soft { color: #999; }
.reset { width: calc(100% - 9px); height: 21px; margin: 4px 0 0 4px; border: 1px solid #e6e6ec; border-radius: 3px; background: #fdfdfe; color: #ccc; }

.status { display: flex; align-items: center; height: 21px; background: #eaeaf4; }
.pg { width: 33px; height: 14px; border-right: 1px solid #d3d3dc; color: #555; }
.psel { position: relative; width: 71px; height: 14px; border-right: 1px solid #d3d3dc; }
.psel select { width: 55px; margin-left: 2px; padding: 0 4px; background: #f3f2f6; color: #222; display: block; height: 16px; margin-top: -1px; }
.psel svg { position: absolute; right: 3px; top: 2px; pointer-events: none; color: #666; }
.padd { width: 37px; height: 14px; border-right: 1px solid #d3d3dc; }
.pcur { width: 52px; height: 14px; border-right: 1px solid #d3d3dc; color: #12a574; font-weight: 600; }
.sright { display: flex; align-items: center; gap: 5px; margin-left: auto; margin-right: 170px; color: #555; }
.sright span { margin-right: 3px; color: #333; }
.minus { width: 6px; height: 1px; background: #555; }
.zoomline { width: 15px; height: 2px; margin-left: -1px; background: #111; }

.ime { position: absolute; right: 2px; bottom: 54px; display: flex; align-items: center; justify-content: center; gap: 2px; width: 41px; height: 18px; border: 1px solid #888; border-radius: 4px; background: #fff; box-shadow: 0 1px 2px #0005; font-size: 8px; color: #333; }
.brand { position: absolute; right: 0; bottom: 0; display: flex; align-items: center; width: 170px; height: 50px; padding-left: 4px; gap: 12px; background: #fff; color: #000; white-space: nowrap; }
.brand span { font: 900 36px/44px "Noto Sans CJK SC", sans-serif; }
</style>
